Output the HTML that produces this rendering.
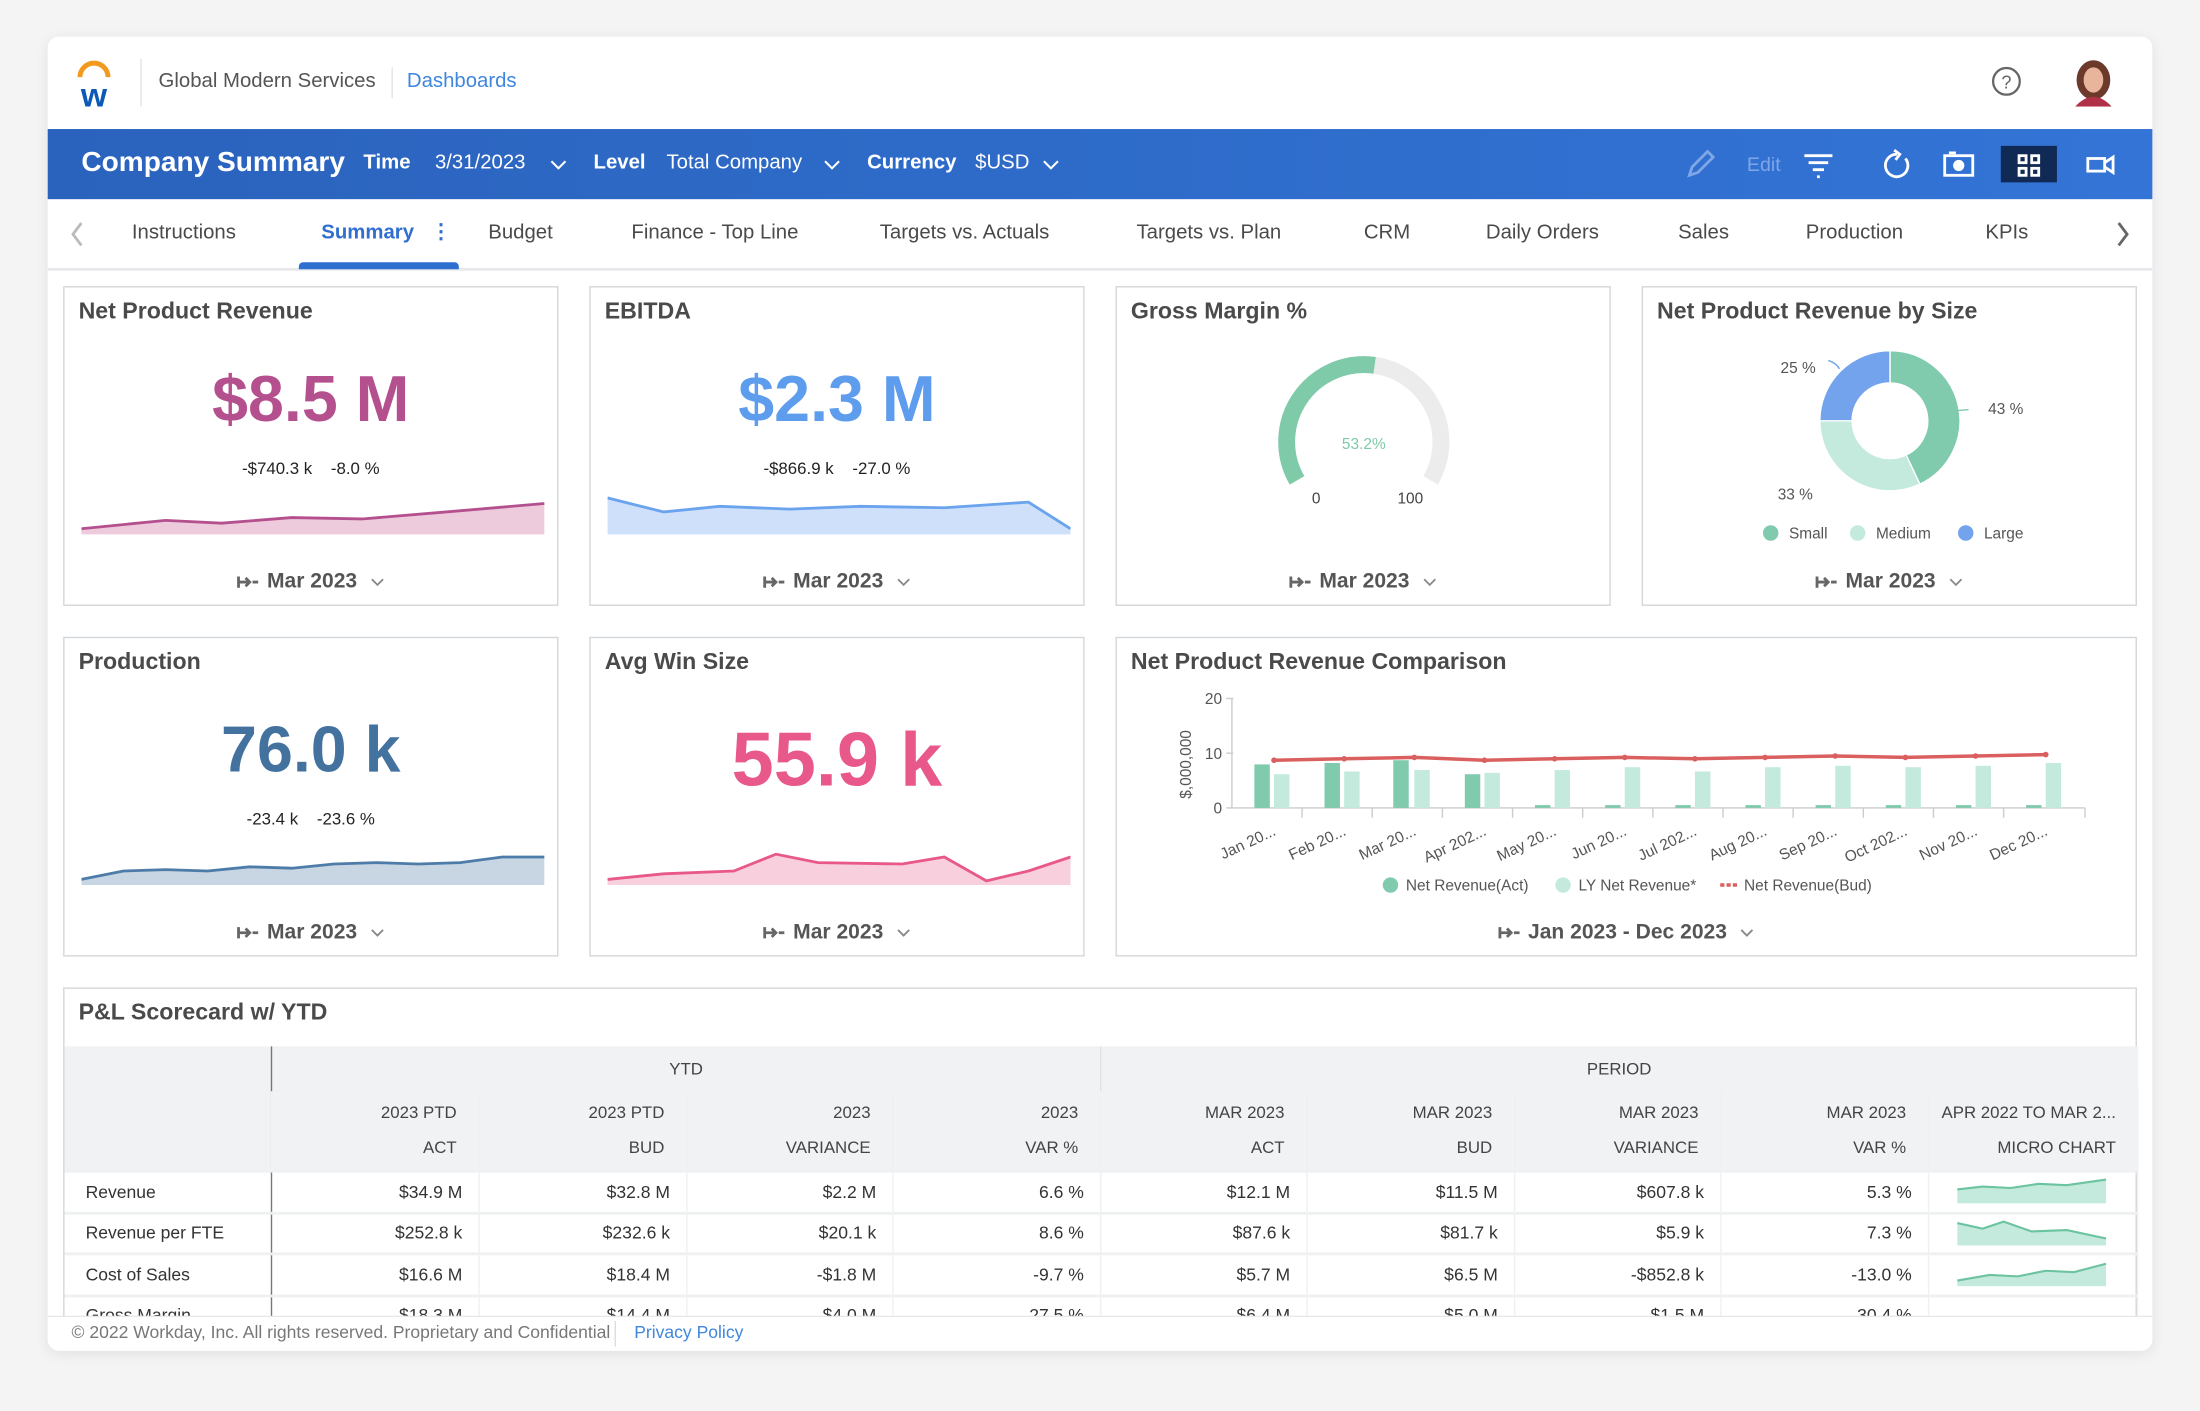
<!DOCTYPE html>
<html><head><meta charset="utf-8"><style>
*{box-sizing:border-box;margin:0;padding:0}
body{width:2200px;height:1411px;overflow:hidden;background:#f4f4f5;font-family:"Liberation Sans",Arial,sans-serif}
#w{position:absolute;left:0;top:0;width:1568px;height:1006px;transform:scale(1.4031,1.4026);transform-origin:0 0}
.a{position:absolute}
.main{left:34px;top:26px;width:1500px;height:937px;background:#fff;border-radius:8px;box-shadow:0 2px 10px rgba(0,0,0,.08);overflow:hidden}
.card{position:absolute;border:1px solid #d3d6da;background:#fff}
.ttl{position:absolute;left:10px;top:8px;font-size:16.5px;font-weight:bold;color:#4a4a4a}
.big{position:absolute;left:0;right:0;text-align:center;font-weight:bold}
.sub{position:absolute;left:0;right:0;text-align:center;font-size:12px;color:#222}
.ft{position:absolute;left:0;right:0;text-align:center;font-size:15px;color:#555;font-weight:bold}
.ft svg{vertical-align:middle}
.tab{position:absolute;top:158px;font-size:14.5px;color:#4a4a4a}
.bw{color:#fff;font-size:14.5px;position:absolute;top:108px}
table{border-collapse:collapse;font-size:12.5px;color:#333}
td{height:29.5px;border-bottom:2px solid #eef0f2;border-right:1px solid #eef0f2;text-align:right;padding-right:11px}
</style></head><body><div id="w">
<div class="a main"></div>
<svg class="a" style="left:50px;top:40px" width="34" height="38" viewBox="0 0 34 38"><path d="M7 15 A10 10 0 0 1 27 15" fill="none" stroke="#f39a1e" stroke-width="3.5"/><text x="17" y="36" text-anchor="middle" font-family="Liberation Sans" font-weight="bold" font-size="24" fill="#0b5ab8">w</text></svg>
<div class="a" style="left:100px;top:42px;width:1px;height:34px;background:#e3e3e3"></div>
<div class="a" style="left:113px;top:50px;font-size:14.5px;color:#555">Global Modern Services</div>
<div class="a" style="left:279px;top:48px;width:1px;height:22px;background:#e3e3e3"></div>
<div class="a" style="left:290px;top:50px;font-size:14.5px;color:#3f86dc">Dashboards</div>
<svg class="a" style="left:1419px;top:47px" width="22" height="22"><circle cx="11" cy="11" r="9.5" fill="none" stroke="#666" stroke-width="1.6"/><text x="11" y="16" text-anchor="middle" font-size="13" fill="#666" font-family="Liberation Sans">?</text></svg>
<svg class="a" style="left:1476px;top:42px" width="32" height="34"><ellipse cx="16" cy="15" rx="12" ry="14" fill="#6b3a2a"/><ellipse cx="16" cy="15" rx="7" ry="9" fill="#e8b59c"/><path d="M3 34 Q16 20 29 34Z" fill="#b03048"/></svg>
<div class="a" style="left:34px;top:92px;width:1500px;height:50px;background:linear-gradient(90deg,#2a63bd,#3374d6)"></div>
<div class="a" style="left:58px;top:105px;font-size:20px;font-weight:bold;color:#fff">Company Summary</div>
<div class="bw" style="left:259px;font-weight:bold">Time</div>
<div class="bw" style="left:310px">3/31/2023</div>
<div class="bw" style="left:423px;font-weight:bold">Level</div>
<div class="bw" style="left:475px">Total Company</div>
<div class="bw" style="left:618px;font-weight:bold">Currency</div>
<div class="bw" style="left:695px">$USD</div>
<svg class="a" style="left:390px;top:112px" width="380" height="12" fill="none" stroke="#fff" stroke-width="1.5"><path d="M3 3l5 5 5-5M198 3l5 5 5-5M354 3l5 5 5-5"/></svg>
<svg class="a" style="left:1200px;top:104px" width="320" height="26" fill="none" stroke="#fff" stroke-width="2">
<path d="M4 21l2-6 11-11 4 4-11 11z" stroke="#7fa6e6"/><text x="45" y="18" font-size="14" fill="#7fa6e6" stroke="none" font-family="Liberation Sans">Edit</text>
<path d="M86 7h20M89 12h14M92 17h8M95 22h2"/>
<path d="M152 6a8 8 0 1 0 6 3M150 3l4 3-3 4"/>
<rect x="186" y="7" width="20" height="14"/><circle cx="196" cy="14" r="3" fill="#fff"/><path d="M189 5h5"/>
<rect x="226" y="-8" width="40" height="42" rx="3" fill="#112a55" stroke="none"/>
<rect x="239" y="7" width="5" height="5"/><rect x="248" y="7" width="5" height="5"/><rect x="239" y="16" width="5" height="5"/><rect x="248" y="16" width="5" height="5"/>
<rect x="288" y="9" width="12" height="9"/><path d="M300 12l6-4v11l-6-4"/>
</svg>
<div class="a" style="left:34px;top:191px;width:1500px;height:2px;background:#e6e8eb"></div>
<svg class="a" style="left:48px;top:157px" width="14" height="20"><path d="M10 2l-6 8 6 8" fill="none" stroke="#bbb" stroke-width="2"/></svg>
<svg class="a" style="left:1506px;top:157px" width="14" height="20"><path d="M4 2l6 8-6 8" fill="none" stroke="#666" stroke-width="2"/></svg>
<div class="tab" style="left:94px">Instructions</div>
<div class="tab" style="left:229px;color:#2f6fd0;font-weight:bold">Summary</div>
<div class="tab" style="left:307px;color:#2f6fd0;font-weight:bold">&#x22EE;</div>
<div class="a" style="left:213px;top:187px;width:114px;height:5px;background:#2f6fd0;border-radius:3px 3px 0 0"></div>
<div class="tab" style="left:348px">Budget</div>
<div class="tab" style="left:450px">Finance - Top Line</div>
<div class="tab" style="left:627px">Targets vs. Actuals</div>
<div class="tab" style="left:810px">Targets vs. Plan</div>
<div class="tab" style="left:972px">CRM</div>
<div class="tab" style="left:1059px">Daily Orders</div>
<div class="tab" style="left:1196px">Sales</div>
<div class="tab" style="left:1287px">Production</div>
<div class="tab" style="left:1415px">KPIs</div>

<div class="card" style="left:45px;top:204px;width:353px;height:228px">
<div class="ttl">Net Product Revenue</div>
<div class="big" style="top:52px;font-size:46px;color:#b5508f">$8.5 M</div>
<div class="sub" style="top:122px">-$740.3 k &nbsp;&nbsp; -8.0 %</div>
<svg class="a" style="left:12px;top:148px" width="330" height="30"><path d="M0 24 L60 18 L100 20 L150 16 L200 17 L260 12 L330 6 L330 28 L0 28Z" fill="#eecbdc"/><path d="M0 24 L60 18 L100 20 L150 16 L200 17 L260 12 L330 6" fill="none" stroke="#b5508f" stroke-width="2"/></svg>
<div class="ft" style="top:201px"><svg width="18" height="12"><path d="M2 2v8M2 6h8M7 3l3 3-3 3M12 6h4" fill="none" stroke="#666" stroke-width="2"/></svg> Mar 2023 &nbsp;<svg width="12" height="10"><path d="M2 3l4 4 4-4" fill="none" stroke="#888" stroke-width="1.3"/></svg></div></div>
<div class="card" style="left:420px;top:204px;width:353px;height:228px">
<div class="ttl">EBITDA</div>
<div class="big" style="top:52px;font-size:46px;color:#5e9ded">$2.3 M</div>
<div class="sub" style="top:122px">-$866.9 k &nbsp;&nbsp; -27.0 %</div>
<svg class="a" style="left:12px;top:148px" width="330" height="30"><path d="M0 2 L40 12 L80 8 L130 10 L180 8 L240 9 L300 5 L330 24 L330 28 L0 28Z" fill="#cfe0fa"/><path d="M0 2 L40 12 L80 8 L130 10 L180 8 L240 9 L300 5 L330 24" fill="none" stroke="#6aa3ee" stroke-width="2"/></svg>
<div class="ft" style="top:201px"><svg width="18" height="12"><path d="M2 2v8M2 6h8M7 3l3 3-3 3M12 6h4" fill="none" stroke="#666" stroke-width="2"/></svg> Mar 2023 &nbsp;<svg width="12" height="10"><path d="M2 3l4 4 4-4" fill="none" stroke="#888" stroke-width="1.3"/></svg></div></div>
<div class="card" style="left:795px;top:204px;width:353px;height:228px">
<div class="ttl">Gross Margin %</div>
<svg class="a" style="left:100px;top:40px" width="152" height="120"><path d="M28.4 97.5 A55 55 0 1 1 123.6 97.5" fill="none" stroke="#ececec" stroke-width="12"/><path d="M28.4 97.5 A55 55 0 0 1 83.7 15.5" fill="none" stroke="#7ecaa9" stroke-width="12"/><text x="76" y="75" text-anchor="middle" font-size="11" fill="#7ecaa9" font-family="Liberation Sans">53.2%</text><text x="39" y="114" font-size="11" fill="#444" font-family="Liberation Sans">0</text><text x="100" y="114" font-size="11" fill="#444" font-family="Liberation Sans">100</text></svg>
<div class="ft" style="top:201px"><svg width="18" height="12"><path d="M2 2v8M2 6h8M7 3l3 3-3 3M12 6h4" fill="none" stroke="#666" stroke-width="2"/></svg> Mar 2023 &nbsp;<svg width="12" height="10"><path d="M2 3l4 4 4-4" fill="none" stroke="#888" stroke-width="1.3"/></svg></div></div>
<div class="card" style="left:1170px;top:204px;width:353px;height:228px">
<div class="ttl">Net Product Revenue by Size</div>
<svg class="a" style="left:70px;top:40px" width="220" height="150" font-family="Liberation Sans" font-size="11" fill="#555">
<path d="M106 5 A50 50 0 0 1 127.3 100.2 L117.5 79.4 A27 27 0 0 0 106 28Z" fill="#80caad" stroke="#fff"/>
<path d="M127.3 100.2 A50 50 0 0 1 56 55 L79 55 A27 27 0 0 0 117.5 79.4Z" fill="#c3eadc" stroke="#fff"/>
<path d="M56 55 A50 50 0 0 1 106 5 L106 28 A27 27 0 0 0 79 55Z" fill="#73a3ec" stroke="#fff"/>
<text x="28" y="21">25 %</text><text x="176" y="50">43 %</text><text x="26" y="111">33 %</text>
<path d="M62 12q6 2 8 6" fill="none" stroke="#73a3ec"/><path d="M162 47l-11 1" stroke="#80caad"/></svg>
<svg class="a" style="left:80px;top:166px" width="200" height="18" font-family="Liberation Sans" font-size="11" fill="#555"><circle cx="11" cy="9" r="5.5" fill="#80caad"/><text x="24" y="13">Small</text><circle cx="73" cy="9" r="5.5" fill="#c3eadc"/><text x="86" y="13">Medium</text><circle cx="150" cy="9" r="5.5" fill="#73a3ec"/><text x="163" y="13">Large</text></svg>
<div class="ft" style="top:201px"><svg width="18" height="12"><path d="M2 2v8M2 6h8M7 3l3 3-3 3M12 6h4" fill="none" stroke="#666" stroke-width="2"/></svg> Mar 2023 &nbsp;<svg width="12" height="10"><path d="M2 3l4 4 4-4" fill="none" stroke="#888" stroke-width="1.3"/></svg></div></div>

<div class="card" style="left:45px;top:454px;width:353px;height:228px">
<div class="ttl">Production</div>
<div class="big" style="top:52px;font-size:46px;color:#44729f">76.0 k</div>
<div class="sub" style="top:122px">-23.4 k &nbsp;&nbsp; -23.6 %</div>
<svg class="a" style="left:12px;top:148px" width="330" height="30"><path d="M0 24 L30 18 L60 17 L90 18 L120 15 L150 16 L180 13 L210 12 L240 13 L270 12 L300 8 L330 8 L330 28 L0 28Z" fill="#c8d5e3"/><path d="M0 24 L30 18 L60 17 L90 18 L120 15 L150 16 L180 13 L210 12 L240 13 L270 12 L300 8 L330 8" fill="none" stroke="#4e7ca9" stroke-width="2"/></svg>
<div class="ft" style="top:201px"><svg width="18" height="12"><path d="M2 2v8M2 6h8M7 3l3 3-3 3M12 6h4" fill="none" stroke="#666" stroke-width="2"/></svg> Mar 2023 &nbsp;<svg width="12" height="10"><path d="M2 3l4 4 4-4" fill="none" stroke="#888" stroke-width="1.3"/></svg></div></div>
<div class="card" style="left:420px;top:454px;width:353px;height:228px">
<div class="ttl">Avg Win Size</div>
<div class="big" style="top:56px;font-size:54px;color:#e8588b">55.9 k</div>
<svg class="a" style="left:12px;top:148px" width="330" height="30"><path d="M0 24 L40 20 L90 18 L120 6 L150 12 L210 13 L240 8 L270 25 L300 18 L330 8 L330 28 L0 28Z" fill="#f8cfdd"/><path d="M0 24 L40 20 L90 18 L120 6 L150 12 L210 13 L240 8 L270 25 L300 18 L330 8" fill="none" stroke="#e8588b" stroke-width="2"/></svg>
<div class="ft" style="top:201px"><svg width="18" height="12"><path d="M2 2v8M2 6h8M7 3l3 3-3 3M12 6h4" fill="none" stroke="#666" stroke-width="2"/></svg> Mar 2023 &nbsp;<svg width="12" height="10"><path d="M2 3l4 4 4-4" fill="none" stroke="#888" stroke-width="1.3"/></svg></div></div>
<div class="card" style="left:795px;top:454px;width:728px;height:228px">
<div class="ttl">Net Product Revenue Comparison</div>
<svg class="a" style="left:0;top:0" width="728" height="200" font-family="Liberation Sans" font-size="11" fill="#555">
<text x="75" y="47" text-anchor="end">20</text><text x="75" y="86" text-anchor="end">10</text><text x="75" y="125" text-anchor="end">0</text>
<text transform="translate(53 90) rotate(-90)" text-anchor="middle">$,000,000</text>
<path d="M78 43h5M78 82h5M78 121h5M82 43v78M82 121h608" stroke="#ccc" fill="none"/>
<g fill="#80caad"><rect x="98" y="90" width="11" height="31"/><rect x="148" y="89" width="11" height="32"/><rect x="197" y="87" width="11" height="34"/><rect x="248" y="97" width="11" height="24"/><rect x="298" y="119" width="11" height="2"/><rect x="348" y="119" width="11" height="2"/><rect x="398" y="119" width="11" height="2"/><rect x="448" y="119" width="11" height="2"/><rect x="498" y="119" width="11" height="2"/><rect x="548" y="119" width="11" height="2"/><rect x="598" y="119" width="11" height="2"/><rect x="648" y="119" width="11" height="2"/></g>
<g fill="#c3eadc"><rect x="112" y="97" width="11" height="24"/><rect x="162" y="95" width="11" height="26"/><rect x="212" y="94" width="11" height="27"/><rect x="262" y="96" width="11" height="25"/><rect x="312" y="94" width="11" height="27"/><rect x="362" y="92" width="11" height="29"/><rect x="412" y="95" width="11" height="26"/><rect x="462" y="92" width="11" height="29"/><rect x="512" y="91" width="11" height="30"/><rect x="562" y="92" width="11" height="29"/><rect x="612" y="91" width="11" height="30"/><rect x="662" y="89" width="11" height="32"/></g>
<polyline points="112,87 162,86 212,85 262,87 312,86 362,85 412,86 462,85 512,84 562,85 612,84 662,83" fill="none" stroke="#d9605e" stroke-width="2.5"/>
<g fill="#d9605e"><circle cx="112" cy="87" r="2"/><circle cx="162" cy="86" r="2"/><circle cx="212" cy="85" r="2"/><circle cx="262" cy="87" r="2"/><circle cx="312" cy="86" r="2"/><circle cx="362" cy="85" r="2"/><circle cx="412" cy="86" r="2"/><circle cx="462" cy="85" r="2"/><circle cx="512" cy="84" r="2"/><circle cx="562" cy="85" r="2"/><circle cx="612" cy="84" r="2"/><circle cx="662" cy="83" r="2"/></g>
<g stroke="#ccc"><path d="M132 121v7M182 121v7M232 121v7M282 121v7M332 121v7M382 121v7M432 121v7M482 121v7M532 121v7M582 121v7M632 121v7M690 121v7"/></g>
<g text-anchor="end"><text transform="translate(114 140) rotate(-25)">Jan 20...</text><text transform="translate(164 140) rotate(-25)">Feb 20...</text><text transform="translate(214 140) rotate(-25)">Mar 20...</text><text transform="translate(264 140) rotate(-25)">Apr 202...</text><text transform="translate(314 140) rotate(-25)">May 20...</text><text transform="translate(364 140) rotate(-25)">Jun 20...</text><text transform="translate(414 140) rotate(-25)">Jul 202...</text><text transform="translate(464 140) rotate(-25)">Aug 20...</text><text transform="translate(514 140) rotate(-25)">Sep 20...</text><text transform="translate(564 140) rotate(-25)">Oct 202...</text><text transform="translate(614 140) rotate(-25)">Nov 20...</text><text transform="translate(664 140) rotate(-25)">Dec 20...</text></g>
<circle cx="195" cy="176" r="5.5" fill="#80caad"/><text x="206" y="180">Net Revenue(Act)</text>
<circle cx="318" cy="176" r="5.5" fill="#c3eadc"/><text x="329" y="180">LY Net Revenue*</text>
<path d="M430 176h13" stroke="#d9605e" stroke-width="2.5" stroke-dasharray="3 1.5"/><text x="447" y="180">Net Revenue(Bud)</text>
</svg>
<div class="ft" style="top:201px"><svg width="18" height="12"><path d="M2 2v8M2 6h8M7 3l3 3-3 3M12 6h4" fill="none" stroke="#666" stroke-width="2"/></svg> Jan 2023 - Dec 2023 &nbsp;<svg width="12" height="10"><path d="M2 3l4 4 4-4" fill="none" stroke="#888" stroke-width="1.3"/></svg></div></div>

<div class="card" style="left:45px;top:704px;width:1478px;height:250px;border-bottom:none">
<div class="ttl">P&amp;L Scorecard w/ YTD</div>
<div class="a" style="left:0;top:41px;width:1478px;height:89px;background:#f1f2f4"></div>
<div class="a" style="left:147px;top:41px;width:1px;height:210px;background:#777"></div>
<div class="a" style="left:148px;top:73px;width:1330px;height:2px;background:#e3e5e8"></div>
<div class="a" style="left:738px;top:41px;width:1px;height:89px;background:#e0e2e5"></div>
<div class="a" style="left:148px;top:50px;width:590px;text-align:center;font-size:12px;color:#444">YTD</div>
<div class="a" style="left:739px;top:50px;width:738px;text-align:center;font-size:12px;color:#444">PERIOD</div>
<div class="a" style="left:15px;top:79px;font-size:12px;color:#444">ACCOUNT</div>
<table class="a" style="left:0;top:73px;width:1478px">
<tr style="background:#f1f2f4;font-size:12px;color:#444"><td style="width:147px;border-right:none"></td><td style="height:57px;line-height:25px;width:148px;padding-right:15px">2023 PTD<br>ACT</td><td style="width:148px;line-height:25px;padding-right:15px">2023 PTD<br>BUD</td><td style="width:147px;line-height:25px;padding-right:15px">2023<br>VARIANCE</td><td style="width:148px;line-height:25px;padding-right:15px">2023<br>VAR %</td><td style="width:147px;line-height:25px;padding-right:15px">MAR 2023<br>ACT</td><td style="width:148px;line-height:25px;padding-right:15px">MAR 2023<br>BUD</td><td style="width:147px;line-height:25px;padding-right:15px">MAR 2023<br>VARIANCE</td><td style="width:148px;line-height:25px;padding-right:15px">MAR 2023<br>VAR %</td><td style="line-height:25px;padding-right:15px">APR 2022 TO MAR 2...<br>MICRO CHART</td></tr>
<tr><td style="text-align:left;padding-left:15px;border-right:none">Revenue</td><td>$34.9 M</td><td>$32.8 M</td><td>$2.2 M</td><td>6.6 %</td><td>$12.1 M</td><td>$11.5 M</td><td>$607.8 k</td><td>5.3 %</td><td style="padding-right:20px"><svg width="110" height="24"><path d="M2 12L20 10 40 11 60 8 80 9 108 5V22H2Z" fill="#c3eadc"/><path d="M2 12L20 10 40 11 60 8 80 9 108 5" fill="none" stroke="#6cc3a0" stroke-width="1.5"/></svg></td></tr>
<tr><td style="text-align:left;padding-left:15px;border-right:none">Revenue per FTE</td><td>$252.8 k</td><td>$232.6 k</td><td>$20.1 k</td><td>8.6 %</td><td>$87.6 k</td><td>$81.7 k</td><td>$5.9 k</td><td>7.3 %</td><td style="padding-right:20px"><svg width="110" height="24"><path d="M2 6L20 10 35 5 55 12 80 11 108 17V22H2Z" fill="#c3eadc"/><path d="M2 6L20 10 35 5 55 12 80 11 108 17" fill="none" stroke="#6cc3a0" stroke-width="1.5"/></svg></td></tr>
<tr><td style="text-align:left;padding-left:15px;border-right:none">Cost of Sales</td><td>$16.6 M</td><td>$18.4 M</td><td>-$1.8 M</td><td>-9.7 %</td><td>$5.7 M</td><td>$6.5 M</td><td>-$852.8 k</td><td>-13.0 %</td><td style="padding-right:20px"><svg width="110" height="24"><path d="M2 18L25 14 45 15 65 11 85 12 108 6V22H2Z" fill="#c3eadc"/><path d="M2 18L25 14 45 15 65 11 85 12 108 6" fill="none" stroke="#6cc3a0" stroke-width="1.5"/></svg></td></tr>
<tr><td style="text-align:left;padding-left:15px;border-right:none">Gross Margin</td><td>$18.3 M</td><td>$14.4 M</td><td>$4.0 M</td><td>27.5 %</td><td>$6.4 M</td><td>$5.0 M</td><td>$1.5 M</td><td>30.4 %</td><td></td></tr>
</table></div>
<div class="a" style="left:34px;top:938px;width:1500px;height:25px;background:#fff;border-top:1px solid #e8e8e8;border-radius:0 0 8px 8px"></div>
<div class="a" style="left:51px;top:943px;font-size:12.5px;color:#777">© 2022 Workday, Inc. All rights reserved. Proprietary and Confidential</div>
<div class="a" style="left:438px;top:942px;width:1px;height:18px;background:#ddd"></div>
<div class="a" style="left:452px;top:943px;font-size:12.5px;color:#3f86dc">Privacy Policy</div>
</div></body></html>
